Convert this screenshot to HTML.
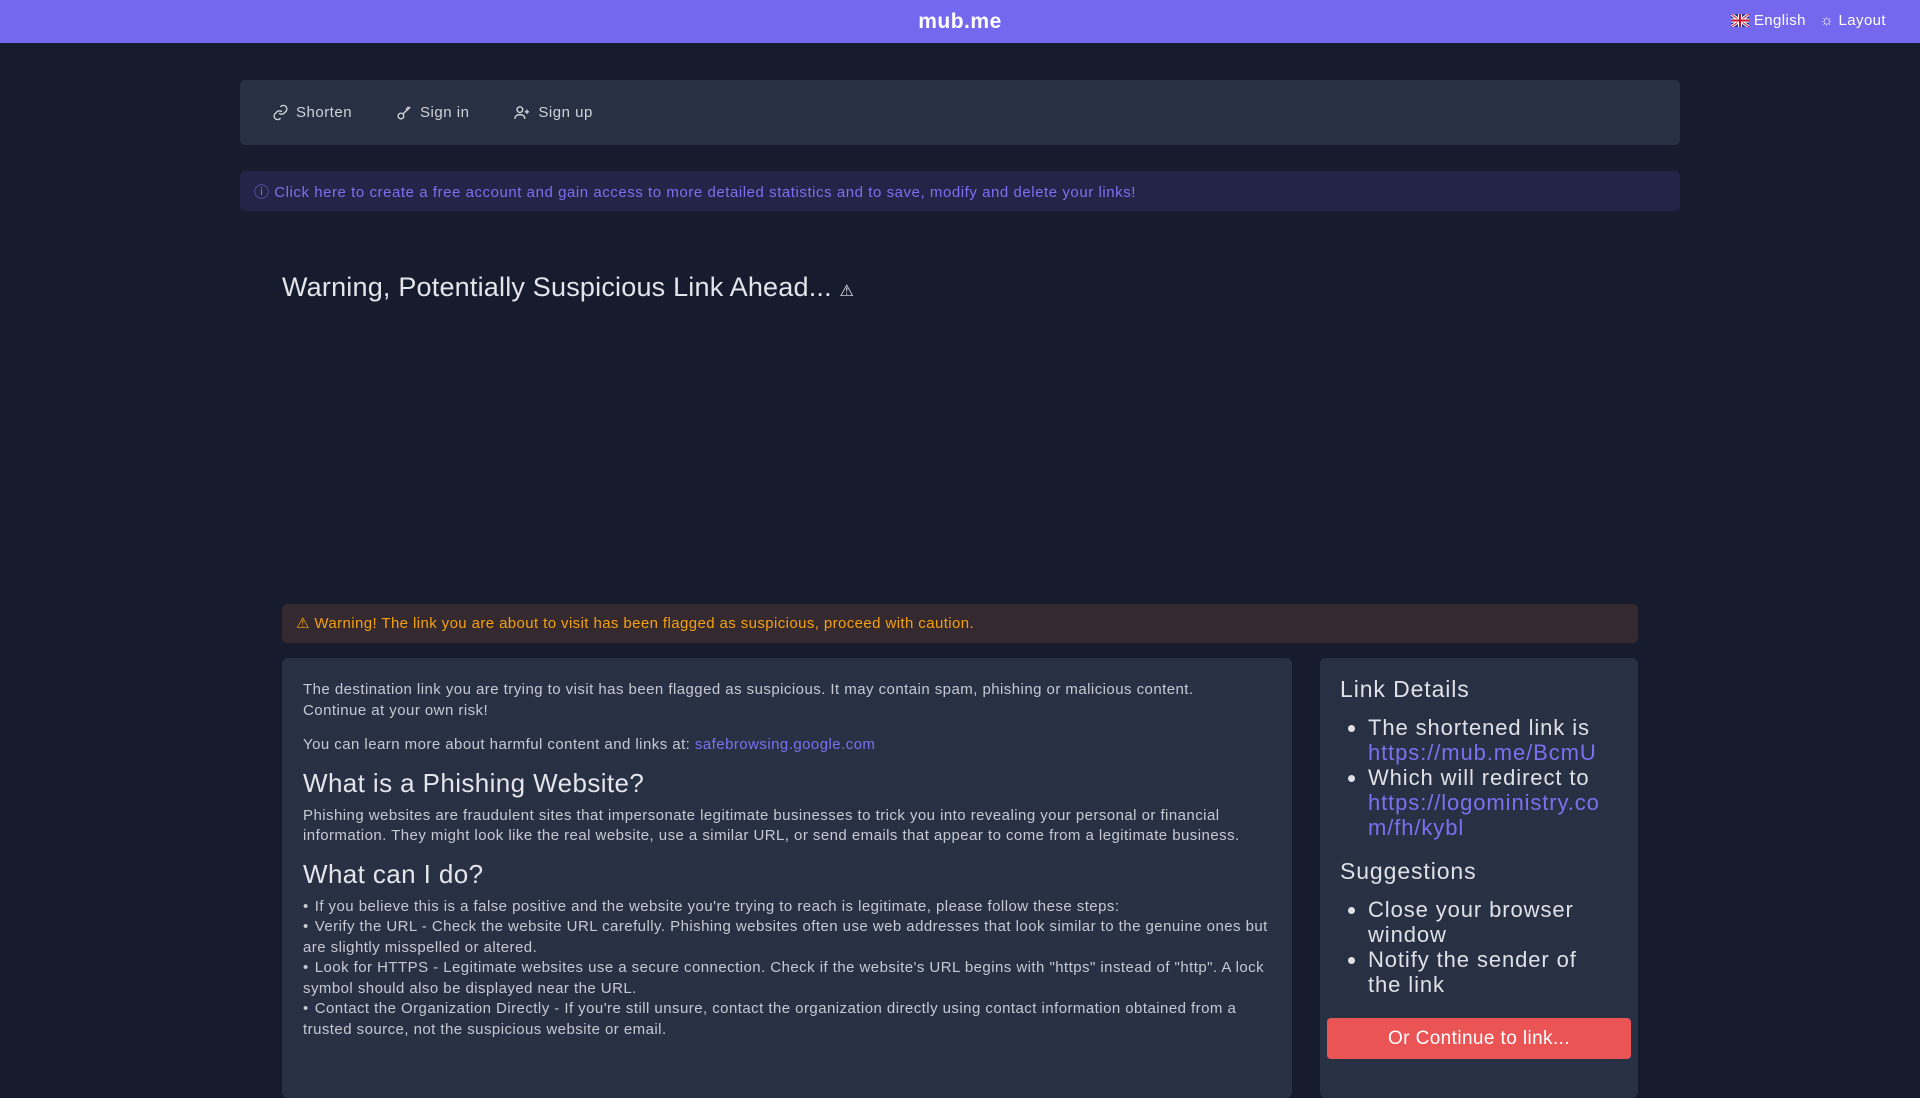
<!DOCTYPE html>
<html><head><meta charset="utf-8"><style>
*{box-sizing:border-box;margin:0;padding:0}
body{width:1920px;height:1080px;overflow:hidden;background:#161c2e;font-family:"Liberation Sans",sans-serif;color:#d0d2d8;position:relative}
.hdr{position:absolute;left:0;top:0;width:1920px;height:43px;background:#7468ef;color:#fff}
.hdr .logo{position:absolute;left:0;right:0;text-align:center;top:10px;font-size:21px;font-weight:bold;letter-spacing:0.5px}
.hdr .r{position:absolute;right:34px;top:12px;font-size:15px;display:flex;gap:14px;align-items:center;letter-spacing:0.4px}
.nav{position:absolute;left:240px;top:80px;width:1440px;height:65px;background:#283044;border-radius:5px;display:flex;align-items:center;padding-left:32px;gap:44px;font-size:15px;color:#d0d2d8;letter-spacing:0.5px}
.nav span{display:flex;align-items:center;gap:7px}
.info{position:absolute;left:240px;top:171px;width:1440px;height:40px;background:#222547;border-radius:5px;color:#7b70f0;font-size:15px;padding:10px 14px;letter-spacing:0.55px}
h1{position:absolute;left:282px;top:272px;font-size:27px;font-weight:normal;color:#e4e5ea;letter-spacing:0.2px}
.warn{position:absolute;left:282px;top:604px;width:1356px;height:39px;background:#33292f;border-radius:5px;color:#f5a00e;font-size:15px;padding:10px 14px;letter-spacing:0.4px}
.lc{position:absolute;left:282px;top:658px;width:1010px;height:440px;background:#283044;border-radius:6px;padding:22px 21px;font-size:15px;line-height:20.5px;color:#c6c9d1;letter-spacing:0.45px}
.lc p{margin-bottom:14px}
.lc h2{font-size:26px;font-weight:normal;color:#e4e5ea;margin:-2px 0 8px;line-height:30px;letter-spacing:0.4px}
.lc li{list-style:none}
.lc li:before{content:"•";margin-right:6px}
a{color:#7b70f0;text-decoration:none}
.rc{position:absolute;left:1320px;top:658px;width:318px;height:440px;background:#283044;border-radius:6px;padding:18px 20px;color:#e0e1e6;letter-spacing:0.9px}
.rc h3{font-size:23px;font-weight:normal;margin-bottom:12px}
.rc ul{padding-left:28px;font-size:22px;line-height:25px;margin-bottom:18px}
.rc ul.s{padding-right:20px}
.rc a{display:block;word-break:break-all}
.btn{position:absolute;left:7px;top:360px;width:304px;height:41px;background:#ea5455;border-radius:4px;color:#fff;font-size:19px;text-align:center;line-height:41px;letter-spacing:0.4px}
</style></head><body>
<div class="hdr"><div class="logo">mub.me</div>
<div class="r"><span><svg width="18" height="13" viewBox="0 0 18 13" style="vertical-align:-2px"><rect width="18" height="13" fill="#1a3b8f"/><path d="M0 0L18 13M18 0L0 13" stroke="#fff" stroke-width="3"/><path d="M0 0L18 13M18 0L0 13" stroke="#c8102e" stroke-width="1"/><path d="M9 0V13M0 6.5H18" stroke="#fff" stroke-width="4"/><path d="M9 0V13M0 6.5H18" stroke="#c8102e" stroke-width="2"/></svg> English</span><span>☼ Layout</span></div></div>
<div class="nav"><span><svg width="17" height="17" viewBox="0 0 24 24" fill="none" stroke="#d0d2d8" stroke-width="2"><path d="M10 13a5 5 0 0 0 7 0l3-3a5 5 0 0 0-7-7l-1 1M14 11a5 5 0 0 0-7 0l-3 3a5 5 0 0 0 7 7l1-1"/></svg>Shorten</span><span><svg width="17" height="17" viewBox="0 0 24 24" fill="none" stroke="#d0d2d8" stroke-width="2"><circle cx="7" cy="17" r="4"/><path d="M10 14l10-10M16 4l3 3M14 6l3 3"/></svg>Sign in</span><span><svg width="18" height="17" viewBox="0 0 24 24" fill="none" stroke="#d0d2d8" stroke-width="2"><circle cx="9" cy="8" r="4"/><path d="M2 21c0-4 3-6 7-6s7 2 7 6M19 8v6M16 11h6"/></svg>Sign up</span></div>
<div class="info">ⓘ Click here to create a free account and gain access to more detailed statistics and to save, modify and delete your links!</div>
<h1>Warning, Potentially Suspicious Link Ahead... <span style="font-size:16px">⚠</span></h1>
<div class="warn">⚠ Warning! The link you are about to visit has been flagged as suspicious, proceed with caution.</div>
<div class="lc">
<p>The destination link you are trying to visit has been flagged as suspicious. It may contain spam, phishing or malicious content.<br>Continue at your own risk!</p>
<p>You can learn more about harmful content and links at: <a>safebrowsing.google.com</a></p>
<h2>What is a Phishing Website?</h2>
<p>Phishing websites are fraudulent sites that impersonate legitimate businesses to trick you into revealing your personal or financial information. They might look like the real website, use a similar URL, or send emails that appear to come from a legitimate business.</p>
<h2>What can I do?</h2>
<ul><li>If you believe this is a false positive and the website you're trying to reach is legitimate, please follow these steps:</li>
<li>Verify the URL - Check the website URL carefully. Phishing websites often use web addresses that look similar to the genuine ones but are slightly misspelled or altered.</li>
<li>Look for HTTPS - Legitimate websites use a secure connection. Check if the website's URL begins with "https" instead of "http". A lock symbol should also be displayed near the URL.</li>
<li>Contact the Organization Directly - If you're still unsure, contact the organization directly using contact information obtained from a trusted source, not the suspicious website or email.</li></ul>
</div>
<div class="rc">
<h3>Link Details</h3>
<ul><li>The shortened link is <a>https://mub.me/BcmU</a></li><li>Which will redirect to <a>https://logoministry.com/fh/kybl</a></li></ul>
<h3>Suggestions</h3>
<ul class="s"><li>Close your browser window</li><li>Notify the sender of the link</li></ul>
<div class="btn">Or Continue to link...</div>
</div>
</body></html>
